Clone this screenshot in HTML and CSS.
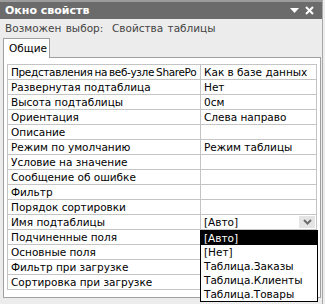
FILE: index.html
```html
<!DOCTYPE html>
<html lang="ru">
<head>
    <meta charset="UTF-8">
    <title>Окно свойств</title>
    <link rel="stylesheet" href="styles.css">
</head>
<body>
    <div class="window">
        <div class="titlebar">
            <span class="title">Окно свойств</span>
            <span class="controls">
                <svg width="9" height="6" viewBox="0 0 9 6"><path d="M0 0H9L4.5 5Z" fill="#fff"/></svg>
                <svg width="9" height="9" viewBox="0 0 9 9"><path d="M1 1L8 8M8 1L1 8" stroke="#fff" stroke-width="2"/></svg>
            </span>
        </div>

        <div class="selection">Возможен выбор:&nbsp; Свойства таблицы</div>

        <div class="tabs">
            <div class="tab">Общие</div>
        </div>

        <div class="panel">
            <table class="props">
                <tr><td class="name tight">Представления на веб-узле SharePo</td><td class="val">Как в базе данных</td></tr>
                <tr><td class="name">Развернутая подтаблица</td><td class="val">Нет</td></tr>
                <tr><td class="name">Высота подтаблицы</td><td class="val">0см</td></tr>
                <tr><td class="name">Ориентация</td><td class="val">Слева направо</td></tr>
                <tr><td class="name">Описание</td><td class="val"></td></tr>
                <tr><td class="name">Режим по умолчанию</td><td class="val">Режим таблицы</td></tr>
                <tr><td class="name">Условие на значение</td><td class="val"></td></tr>
                <tr><td class="name">Сообщение об ошибке</td><td class="val"></td></tr>
                <tr><td class="name">Фильтр</td><td class="val"></td></tr>
                <tr><td class="name">Порядок сортировки</td><td class="val"></td></tr>
                <tr>
                    <td class="name">Имя подтаблицы</td>
                    <td class="val combo">
                        <span>[Авто]</span>
                        <span class="arrow">
                            <svg width="9" height="6" viewBox="0 0 9 6"><path d="M1 1L4.5 4.5L8 1" stroke="#6d6d6d" stroke-width="2" fill="none"/></svg>
                        </span>
                        <ul class="list">
                            <li class="selected">[Авто]</li>
                            <li>[Нет]</li>
                            <li>Таблица.Заказы</li>
                            <li>Таблица.Клиенты</li>
                            <li>Таблица.Товары</li>
                        </ul>
                    </td>
                </tr>
                <tr><td class="name">Подчиненные поля</td><td class="val"></td></tr>
                <tr><td class="name">Основные поля</td><td class="val"></td></tr>
                <tr><td class="name">Фильтр при загрузке</td><td class="val"></td></tr>
                <tr><td class="name">Сортировка при загрузке</td><td class="val"></td></tr>
            </table>
        </div>
    </div>
</body>
</html>
```

FILE: styles.css
```css
body {
    margin: 0;
    font-family: "DejaVu Sans", Verdana, sans-serif;
    font-size: 10.5px;
    background-color: #ececec;
    overflow: hidden;
}

.window {
    width: 322px;
    height: 304px;
    border-right: 1px solid #a8a8a8;
    background-color: #ececec;
}

.titlebar {
    height: 19px;
    box-sizing: border-box;
    border-top: 2px solid #9c9c9c;
    background-color: #6b6b6b;
    display: flex;
    align-items: center;
    justify-content: space-between;
    padding: 0 8px 0 5px;
}

.title {
    color: #fff;
    font-weight: bold;
    font-size: 11px;
}

.controls {
    display: flex;
    align-items: center;
    gap: 6px;
}

.controls svg {
    display: block;
}

.selection {
    height: 19px;
    line-height: 19px;
    padding-left: 5px;
    color: #444;
    word-spacing: 1px;
}

.tabs {
    height: 19px;
    padding-left: 3px;
    display: flex;
}

.tab {
    width: 47px;
    box-sizing: border-box;
    height: 20px;
    line-height: 18px;
    padding-left: 5px;
    border: 1px solid #a0a0a0;
    border-bottom: none;
    background-color: #fff;
    position: relative;
    z-index: 1;
}

.panel {
    margin-left: 3px;
    width: 318px;
    height: 241px;
    box-sizing: border-box;
    border: 1px solid #a0a0a0;
    background-color: #fff;
    padding: 6px 3px 0 3px;
}

.props {
    border-collapse: collapse;
    width: 310px;
    table-layout: fixed;
}

.props td {
    height: 14px;
    padding: 0 0 0 3px;
    border: 1px solid #c4c4c4;
    white-space: nowrap;
    overflow: hidden;
    line-height: 14px;
    color: #000;
}

.props .name {
    width: 189px;
}

/* long label must fit like in the original */
.props .tight {
    letter-spacing: -0.35px;
    word-spacing: -1px;
}

.combo {
    position: relative;
    overflow: visible !important;
}

.arrow {
    position: absolute;
    right: 1px;
    top: 1px;
    width: 16px;
    height: 12px;
    background-color: #e4e4e4;
    display: flex;
    align-items: center;
    justify-content: center;
}

.list {
    position: absolute;
    left: -1px;
    top: 15px;
    width: 116px;
    margin: 0;
    padding: 0;
    list-style: none;
    background-color: #fff;
    border: 1px solid #000;
    z-index: 2;
}

.list li {
    height: 14px;
    line-height: 14px;
    padding-left: 3px;
}

.list .selected {
    background-color: #000;
    color: #fff;
}
```
